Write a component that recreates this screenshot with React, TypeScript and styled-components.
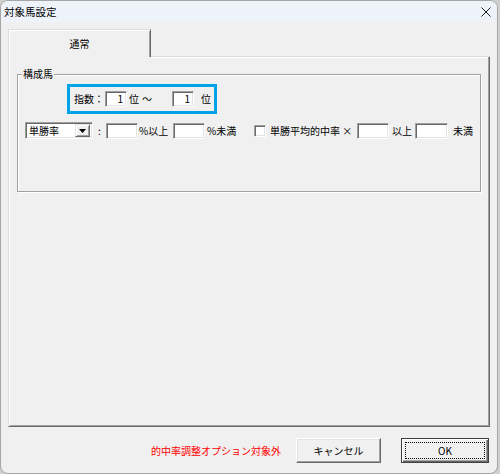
import React from 'react'
import styled, { createGlobalStyle } from 'styled-components'

const GlobalStyle = createGlobalStyle`
  html,
  body {
    margin: 0;
    padding: 0;
    background: #cfcfcf;
  }

  body {
    font-family: 'Noto Sans CJK JP', 'Noto Sans', sans-serif;
    font-size: 10px;
    color: #000;
  }
`

const Window = styled.div`
  width: 498px;
  height: 474px;
  box-sizing: border-box;
  border: 1px solid #a6a6a6;
  border-radius: 8px;
  overflow: hidden;
  background: #f0f0f0;
  display: flex;
  flex-direction: column;
`

const TitleBar = styled.div`
  flex: none;
  height: 21px;
  display: flex;
  align-items: center;
  justify-content: space-between;
  padding: 0 6px 0 3px;
  background: #eef3fa;
`

const Title = styled.span`
  font-size: 10.5px;
  line-height: 12px;
`

const CloseButton = styled.span`
  display: flex;
  width: 10px;
  height: 10px;
  margin-top: 1px;
`

const Body = styled.div`
  flex: 1;
  display: flex;
  flex-direction: column;
  padding: 7px 7px 0 7px;
`

const TabStrip = styled.div`
  flex: none;
  display: flex;
  height: 28px;
`

const Tab = styled.div`
  box-sizing: border-box;
  width: 143px;
  display: flex;
  align-items: center;
  justify-content: center;
  border-top: 1px solid #dcdcdc;
  border-left: 1px solid #dcdcdc;
  border-right: 1px solid #696969;
  box-shadow: inset 1px 1px #fff, inset -1px 0 #a0a0a0;
  line-height: 12px;
`

const TabFiller = styled.div`
  flex: 1;
  border-bottom: 1px solid #dcdcdc;
  box-shadow: 0 1px #fff;
`

const Panel = styled.div`
  flex: none;
  box-sizing: border-box;
  height: 370px;
  padding: 11px 8px 0 8px;
  border-left: 1px solid #dcdcdc;
  border-right: 1px solid #696969;
  border-bottom: 1px solid #696969;
  box-shadow: inset 1px 0 #fff, inset -1px -1px #a0a0a0;
`

const GroupBox = styled.fieldset`
  box-sizing: border-box;
  height: 124px;
  margin: 0;
  padding: 4px 0 0 0;
  border: 1px solid #a0a0a0;
  box-shadow: 1px 1px #fff, inset 1px 1px #fff;
  min-inline-size: 0;
`

const Legend = styled.legend`
  margin-left: 4px;
  padding: 0 1px;
  line-height: 12px;
  background: #f0f0f0;
`

const Highlight = styled.div`
  box-sizing: border-box;
  width: 150px;
  height: 30px;
  margin-left: 49px;
  padding-left: 4px;
  display: flex;
  align-items: center;
  border: 3px solid #00a2e8;
`

const Row = styled.div`
  display: flex;
  align-items: center;
  height: 17px;
  margin-top: 8px;
  padding-left: 7px;
`

const Label = styled.span<{ $w?: number; $pl?: number; $center?: boolean }>`
  flex: none;
  width: ${(p) => (p.$w ? `${p.$w}px` : 'auto')};
  padding-left: ${(p) => p.$pl ?? 0}px;
  box-sizing: border-box;
  text-align: ${(p) => (p.$center ? 'center' : 'left')};
  line-height: 12px;
  white-space: nowrap;
`

const sunken = `
  box-sizing: border-box;
  background: #fff;
  border-top: 1px solid #a0a0a0;
  border-left: 1px solid #a0a0a0;
  border-bottom: 1px solid #fff;
  border-right: 1px solid #fff;
  box-shadow: inset 1px 1px #696969, inset -1px -1px #e3e3e3;
`

const Field = styled.div<{ $w: number; $h?: number }>`
  ${sunken}
  flex: none;
  width: ${(p) => p.$w}px;
  height: ${(p) => p.$h ?? 16}px;
  padding-right: 3px;
  display: flex;
  align-items: center;
  justify-content: flex-end;
  line-height: 12px;
`

const Combo = styled.div`
  ${sunken}
  flex: none;
  width: 68px;
  height: 17px;
  padding: 0 2px 0 3px;
  display: flex;
  align-items: center;
  line-height: 12px;
`

const DropButton = styled.span`
  box-sizing: border-box;
  margin-left: auto;
  width: 15px;
  height: 13px;
  display: flex;
  align-items: center;
  justify-content: center;
  background: #f0f0f0;
  border-top: 1px solid #e3e3e3;
  border-left: 1px solid #e3e3e3;
  border-right: 1px solid #696969;
  border-bottom: 1px solid #696969;
  box-shadow: inset 1px 1px #fff, inset -1px -1px #a0a0a0;
`

const Check = styled.span`
  ${sunken}
  flex: none;
  width: 12px;
  height: 12px;
`

const Footer = styled.div`
  flex: 1;
  display: flex;
  align-items: flex-start;
  justify-content: flex-end;
  padding: 11px 1px 0 0;
`

const Note = styled.span`
  color: #ff0000;
  line-height: 25px;
  margin-right: 15px;
`

const Button = styled.div<{ $w: number; $default?: boolean }>`
  box-sizing: border-box;
  width: ${(p) => p.$w}px;
  height: 25px;
  display: flex;
  align-items: center;
  justify-content: center;
  background: #f0f0f0;
  line-height: 12px;
  border: 1px solid;
  border-color: ${(p) => (p.$default ? '#404040' : '#fff #696969 #696969 #fff')};
  box-shadow: ${(p) =>
    p.$default
      ? 'inset 1px 1px #fff, inset -1px -1px #696969, inset -2px -2px #a0a0a0'
      : 'inset -1px -1px #a0a0a0, inset 1px 1px #e3e3e3'};
  outline: ${(p) => (p.$default ? '1px dotted #000' : 'none')};
  outline-offset: -5px;
  margin-left: ${(p) => (p.$default ? 20 : 0)}px;
`

const App = () => {
  return (
    <>
      <GlobalStyle />
      <Window>
        <TitleBar>
          <Title>対象馬設定</Title>
          <CloseButton>
            <svg width="10" height="10" viewBox="0 0 10 10">
              <path d="M0.5 0.5 L9.5 9.5 M9.5 0.5 L0.5 9.5" stroke="#1b1b1b" strokeWidth="1" />
            </svg>
          </CloseButton>
        </TitleBar>
        <Body>
          <TabStrip>
            <Tab>通常</Tab>
            <TabFiller />
          </TabStrip>
          <Panel>
            <GroupBox>
              <Legend>構成馬</Legend>
              <Highlight>
                <Label $w={31}>指数：</Label>
                <Field $w={22} $h={16}>1</Field>
                <Label $pl={2} $w={12}>位</Label>
                <Label $w={33} $pl={3}>〜</Label>
                <Field $w={22} $h={16}>1</Field>
                <Label $pl={7}>位</Label>
              </Highlight>
              <Row>
                <Combo>
                  単勝率
                  <DropButton>
                    <svg width="7" height="4" viewBox="0 0 7 4">
                      <path d="M0 0 H7 L3.5 4 Z" fill="#000" />
                    </svg>
                  </DropButton>
                </Combo>
                <Label $w={13} $center>:</Label>
                <Field $w={32} />
                <Label $w={35} $pl={1}>%以上</Label>
                <Field $w={32} />
                <Label $w={49} $pl={2}>%未満</Label>
                <Check />
                <Label $w={91} $pl={4}>単勝平均的中率 ×</Label>
                <Field $w={32} />
                <Label $w={26} $pl={3}>以上</Label>
                <Field $w={33} />
                <Label $pl={5}>未満</Label>
              </Row>
            </GroupBox>
          </Panel>
          <Footer>
            <Note>的中率調整オプション対象外</Note>
            <Button $w={85}>キャンセル</Button>
            <Button $w={88} $default>OK</Button>
          </Footer>
        </Body>
      </Window>
    </>
  )
}

export default App
